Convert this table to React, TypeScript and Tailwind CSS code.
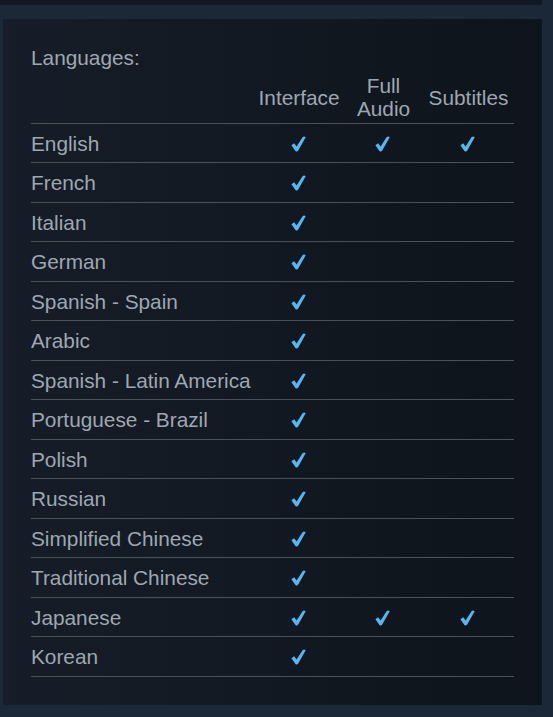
import React from "react";

type Lang = {
  name: string;
  ui: boolean;
  audio: boolean;
  subs: boolean;
};

const languages: Lang[] = [
  { name: "English", ui: true, audio: true, subs: true },
  { name: "French", ui: true, audio: false, subs: false },
  { name: "Italian", ui: true, audio: false, subs: false },
  { name: "German", ui: true, audio: false, subs: false },
  { name: "Spanish - Spain", ui: true, audio: false, subs: false },
  { name: "Arabic", ui: true, audio: false, subs: false },
  { name: "Spanish - Latin America", ui: true, audio: false, subs: false },
  { name: "Portuguese - Brazil", ui: true, audio: false, subs: false },
  { name: "Polish", ui: true, audio: false, subs: false },
  { name: "Russian", ui: true, audio: false, subs: false },
  { name: "Simplified Chinese", ui: true, audio: false, subs: false },
  { name: "Traditional Chinese", ui: true, audio: false, subs: false },
  { name: "Japanese", ui: true, audio: true, subs: true },
  { name: "Korean", ui: true, audio: false, subs: false },
];

// blue tick, drawn as a filled shape so both arms read thick
function Check() {
  return (
    <svg width="15" height="16" viewBox="0 0 15 16" className="block">
      <path
        d="M0.4 9.3 L3.2 7.3 L5.6 10.4 L11.7 0.9 Q13.4 0 14.7 1.3 L7.1 14.8 Q5.8 16.1 4.4 14.9 Z"
        fill="#55b6f1"
      />
    </svg>
  );
}

function Cell({ on }: { on: boolean }) {
  return (
    <div className="flex items-center justify-center pt-[1px]">
      {on && <Check />}
    </div>
  );
}

export default function App() {
  return (
    <div
      className="min-h-screen bg-[#1b2838] text-[#9ea7b1] text-[20.8px]"
      style={{ fontFamily: '"Liberation Sans", Arial, sans-serif' }}
    >
      <div className="h-[5px] w-[542px] bg-[#111821]" />

      <div className="mt-[14px] ml-[3px] w-[539px] bg-gradient-to-r from-[#161d28] to-[#0e141b] px-[28px] pt-[27px] pb-[28px]">
        <div className="h-[23px] leading-[23px]">Languages:</div>

        {/* header row */}
        <div className="mt-[5px] grid grid-cols-[225px_84px_85px_85px] items-center border-b border-[#4b5159] pb-[3px] leading-[23px]">
          <div />
          <div className="text-center pl-[2px]">Interface</div>
          <div className="text-center pl-[2px]">
            Full
            <br />
            Audio
          </div>
          <div className="text-center pl-[2px]">Subtitles</div>
        </div>

        {languages.map((l, i) => (
          <div
            key={l.name}
            className={
              "grid grid-cols-[225px_84px_85px_85px] items-center border-b border-[#4b5159] leading-[23px] " +
              (i % 2 === 0 ? "h-[39px]" : "h-[40px]")
            }
          >
            <div className="whitespace-nowrap">{l.name}</div>
            <Cell on={l.ui} />
            <Cell on={l.audio} />
            <Cell on={l.subs} />
          </div>
        ))}
      </div>
    </div>
  );
}
